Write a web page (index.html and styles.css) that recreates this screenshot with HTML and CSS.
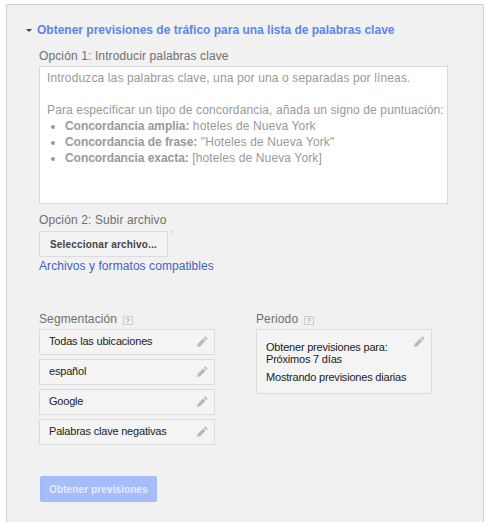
FILE: index.html
```html
<!DOCTYPE html>
<html lang="es">
<head>
    <meta charset="UTF-8">
    <title>Obtener previsiones</title>
    <link rel="stylesheet" href="styles.css">
</head>
<body>
    <div class="panel">
        <h2 class="section-title"><span class="arrow"></span>Obtener previsiones de tráfico para una lista de palabras clave</h2>

        <div class="section-body">
            <label class="field-label">Opción 1: Introducir palabras clave</label>
            <div class="keywords-box">
                <p>Introduzca las palabras clave, una por una o separadas por líneas.</p>
                <p class="gap">Para especificar un tipo de concordancia, añada un signo de puntuación:</p>
                <ul>
                    <li><b>Concordancia amplia:</b> hoteles de Nueva York</li>
                    <li><b>Concordancia de frase:</b> "Hoteles de Nueva York"</li>
                    <li><b>Concordancia exacta:</b> [hoteles de Nueva York]</li>
                </ul>
            </div>

            <label class="field-label option-two">Opción 2: Subir archivo</label>
            <div class="file-row">
                <button class="file-button">Seleccionar archivo...</button>
                <span class="file-tick"></span>
            </div>
            <a class="help-link" href="#">Archivos y formatos compatibles</a>

            <div class="columns">
                <div class="targeting">
                    <div class="field-label">Segmentación <span class="hint">?</span></div>
                    <div class="option-row">Todas las ubicaciones
                        <svg class="pencil" viewBox="0 0 12 12"><path d="M8.6 1.2l2.2 2.2-1.3 1.3-2.2-2.2zM6.6 3.2l2.2 2.2-4.9 4.9-3 .8.8-3z"/></svg>
                    </div>
                    <div class="option-row">español
                        <svg class="pencil" viewBox="0 0 12 12"><path d="M8.6 1.2l2.2 2.2-1.3 1.3-2.2-2.2zM6.6 3.2l2.2 2.2-4.9 4.9-3 .8.8-3z"/></svg>
                    </div>
                    <div class="option-row">Google
                        <svg class="pencil" viewBox="0 0 12 12"><path d="M8.6 1.2l2.2 2.2-1.3 1.3-2.2-2.2zM6.6 3.2l2.2 2.2-4.9 4.9-3 .8.8-3z"/></svg>
                    </div>
                    <div class="option-row">Palabras clave negativas
                        <svg class="pencil" viewBox="0 0 12 12"><path d="M8.6 1.2l2.2 2.2-1.3 1.3-2.2-2.2zM6.6 3.2l2.2 2.2-4.9 4.9-3 .8.8-3z"/></svg>
                    </div>
                </div>
                <div class="period">
                    <div class="field-label">Periodo <span class="hint">?</span></div>
                    <div class="period-box">
                        <div>Obtener previsiones para:<br>Próximos 7 días</div>
                        <div class="period-note">Mostrando previsiones diarias</div>
                        <svg class="pencil" viewBox="0 0 12 12"><path d="M8.6 1.2l2.2 2.2-1.3 1.3-2.2-2.2zM6.6 3.2l2.2 2.2-4.9 4.9-3 .8.8-3z"/></svg>
                    </div>
                </div>
            </div>

            <button class="submit-button">Obtener previsiones</button>
        </div>
    </div>
</body>
</html>
```

FILE: styles.css
```css
html, body {
    height: 100%;
}

body {
    margin: 0;
    background-color: #fff;
    font-family: "Liberation Sans", Arial, sans-serif;
    overflow: hidden;
}

.panel {
    margin: 4px 0 0 6px;
    width: 478px;
    height: 518px;
    box-sizing: border-box;
    background-color: #f1f1f1;
    border: 1px solid #d0d0d0;
    border-bottom: none;
    padding: 17px 0 0 18px;
}

.section-title {
    position: relative;
    margin: 0;
    padding-left: 12px;
    color: #5b85f0;
    font-size: 12px;
    font-weight: bold;
    line-height: 16px;
}

.arrow {
    position: absolute;
    left: 1px;
    top: 7px;
    border-left: 3px solid transparent;
    border-right: 3px solid transparent;
    border-top: 3px solid #444;
}

.section-body {
    padding-left: 14px;
}

.field-label {
    display: block;
    color: #707070;
    font-size: 12px;
    letter-spacing: 0.12px;
    line-height: 16px;
}

.section-body > .field-label:first-child {
    margin-top: 10px;
}

.keywords-box {
    box-sizing: border-box;
    width: 409px;
    height: 138px;
    margin-top: 2px;
    padding: 3px 0 0 7px;
    background-color: #fff;
    border: 1px solid #d9d9d9;
    color: #999;
    font-size: 12px;
    letter-spacing: 0.13px;
    line-height: 16px;
    white-space: nowrap;
}

.keywords-box p {
    margin: 0;
}

.keywords-box .gap {
    margin-top: 16px;
}

.keywords-box ul {
    margin: 0;
    padding-left: 18px;
}

.keywords-box b {
    letter-spacing: -0.05px;
}

.option-two {
    margin-top: 8px;
}

.file-row {
    position: relative;
    width: 129px;
    margin-top: 3px;
}

.file-button {
    display: block;
    box-sizing: border-box;
    width: 129px;
    height: 26px;
    padding: 0;
    background-color: #f3f3f3;
    border: 1px solid #dcdcdc;
    color: #444;
    font-family: inherit;
    font-size: 10px;
    font-weight: bold;
    letter-spacing: 0.2px;
}

.file-tick {
    position: absolute;
    left: 132px;
    top: -1px;
    width: 1px;
    height: 3px;
    background-color: #c4c4c4;
}

.help-link {
    display: block;
    margin-top: 1px;
    color: #3f62c8;
    font-size: 12px;
    letter-spacing: 0.07px;
    line-height: 16px;
    text-decoration: none;
}

.columns {
    display: flex;
    margin-top: 37px;
}

.targeting {
    width: 176px;
    margin-right: 41px;
}

.hint {
    display: inline-block;
    box-sizing: border-box;
    width: 10px;
    height: 9px;
    margin-left: 2px;
    border: 1px solid #ccc;
    color: #888;
    font-size: 7px;
    letter-spacing: 0;
    line-height: 7px;
    text-align: center;
}

.option-row {
    position: relative;
    box-sizing: border-box;
    height: 26px;
    margin-top: 4px;
    padding-left: 9px;
    background-color: #f4f4f4;
    border: 1px solid #dcdcdc;
    color: #222;
    font-size: 11px;
    letter-spacing: -0.2px;
    line-height: 22px;
}

.targeting .field-label + .option-row {
    margin-top: 2px;
}

.pencil {
    position: absolute;
    right: 5px;
    top: 5px;
    width: 13px;
    height: 13px;
    fill: #b9b9b9;
}

.period {
    width: 176px;
}

.period-box {
    position: relative;
    box-sizing: border-box;
    height: 65px;
    margin-top: 2px;
    padding: 11px 0 0 9px;
    background-color: #f4f4f4;
    border: 1px solid #dcdcdc;
    color: #222;
    font-size: 11px;
    letter-spacing: -0.2px;
    line-height: 12px;
}

.period-note {
    margin-top: 6px;
}

.submit-button {
    display: block;
    box-sizing: border-box;
    width: 117px;
    height: 26px;
    margin: 31px 0 0 1px;
    padding: 0;
    background-color: #a5bdfb;
    border: 1px solid #a3bbfa;
    border-radius: 2px;
    color: #e6ecfc;
    font-family: inherit;
    font-size: 10px;
    font-weight: bold;
    letter-spacing: 0.12px;
}
```
